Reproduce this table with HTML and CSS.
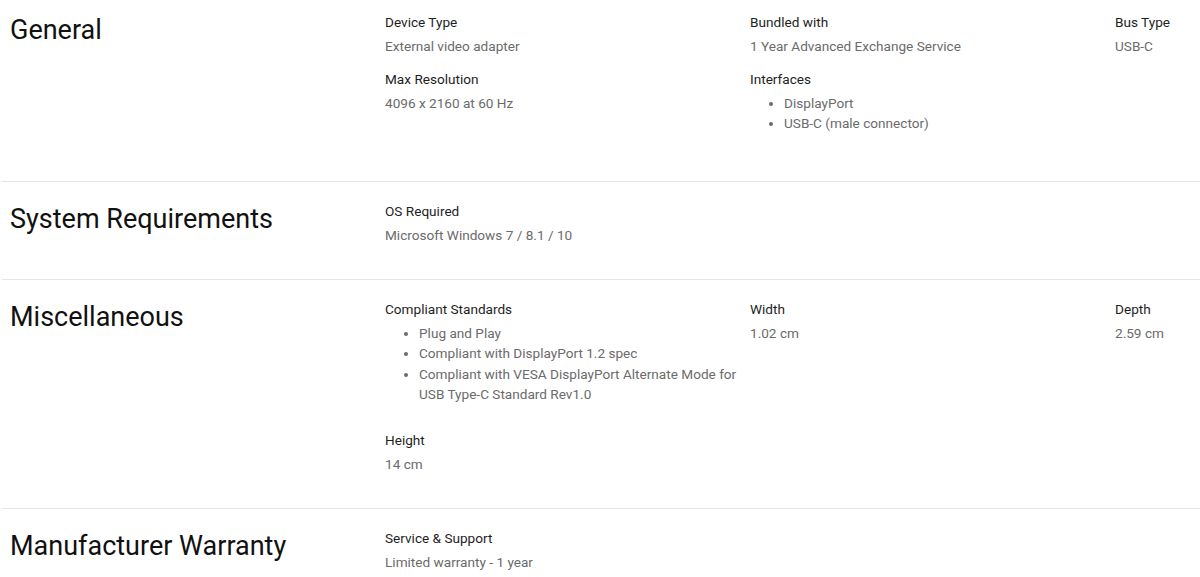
FILE: index.html
```html
<!DOCTYPE html>
<html lang="en">
<head>
<meta charset="utf-8">
<title>Specifications</title>
<link rel="stylesheet" href="styles.css">
</head>
<body>
<div class="specs">
  <section class="group first">
    <h2 class="group-title">General</h2>
    <div class="items">
      <div class="item"><div class="label">Device Type</div><div class="value">External video adapter</div></div>
      <div class="item"><div class="label">Bundled with</div><div class="value">1 Year Advanced Exchange Service</div></div>
      <div class="item"><div class="label">Bus Type</div><div class="value">USB-C</div></div>
      <div class="item"><div class="label">Max Resolution</div><div class="value">4096 x 2160 at 60 Hz</div></div>
      <div class="item"><div class="label">Interfaces</div>
        <ul class="value list"><li>DisplayPort</li><li>USB-C (male connector)</li></ul>
      </div>
    </div>
  </section>
  <section class="group">
    <h2 class="group-title">System Requirements</h2>
    <div class="items">
      <div class="item"><div class="label">OS Required</div><div class="value">Microsoft Windows 7 / 8.1 / 10</div></div>
    </div>
  </section>
  <section class="group">
    <h2 class="group-title">Miscellaneous</h2>
    <div class="items">
      <div class="item"><div class="label">Compliant Standards</div>
        <ul class="value list"><li>Plug and Play</li><li>Compliant with DisplayPort 1.2 spec</li><li>Compliant with VESA DisplayPort Alternate Mode for USB Type-C Standard Rev1.0</li></ul>
      </div>
      <div class="item"><div class="label">Width</div><div class="value">1.02 cm</div></div>
      <div class="item"><div class="label">Depth</div><div class="value">2.59 cm</div></div>
      <div class="item"><div class="label">Height</div><div class="value">14 cm</div></div>
    </div>
  </section>
  <section class="group">
    <h2 class="group-title">Manufacturer Warranty</h2>
    <div class="items">
      <div class="item"><div class="label">Service &amp; Support</div><div class="value">Limited warranty - 1 year</div></div>
    </div>
  </section>
</div>
</body>
</html>
```

FILE: styles.css
```css
html, body {
  margin: 0;
  padding: 0;
  background: #ffffff;
  overflow: hidden;
}
body {
  font-family: Roboto, "Liberation Sans", Arial, sans-serif;
  color: #212121;
}
.specs {
  padding-left: 2px;
}
.group {
  display: grid;
  grid-template-columns: 383px 1fr;
  padding: 19px 0 21px 0;
  border-bottom: 1px solid #e5e5e5;
}
.group.first {
  padding-top: 12px;
}
.group-title {
  margin: 2px 0 0 8px;
  font-size: 27px;
  line-height: 32px;
  font-weight: 400;
  color: #111111;
}
.items {
  display: grid;
  grid-template-columns: 365px 365px 1fr;
  align-items: start;
}
.item {
  margin-bottom: 13px;
  font-size: 13.6px;
}
.label {
  line-height: 20px;
  margin-bottom: 4px;
  color: #1e1e1e;
}
.value {
  line-height: 20px;
  color: #6b6b6b;
}
.list {
  margin: 0 0 13px 0;
  padding-left: 34px;
  line-height: 20.4px;
}
.list li::marker {
  color: #6b6b6b;
}
```
